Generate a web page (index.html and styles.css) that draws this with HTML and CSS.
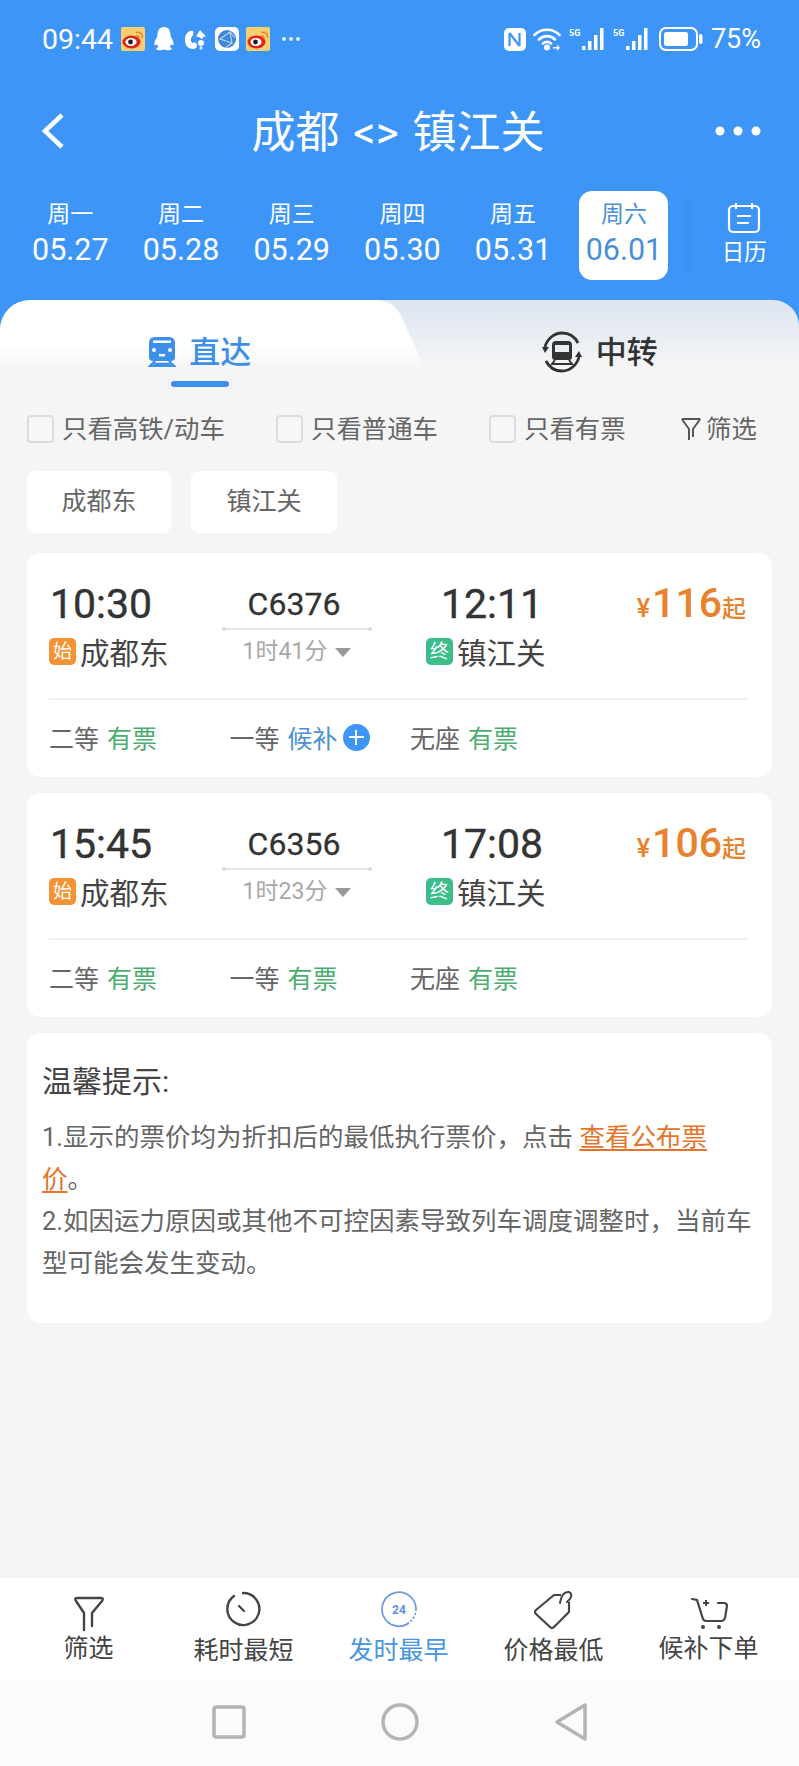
FILE: index.html
```html
<!DOCTYPE html>
<html lang="zh-CN">
<head>
<meta charset="utf-8">
<title>成都 &lt;&gt; 镇江关</title>
<link rel="stylesheet" href="styles.css">
</head>
<body>
<header class="header">
  <div class="status">
    <div class="status-left">
      <span class="clock">09:44</span>
      <svg class="st-icon" width="24" height="24" viewBox="0 0 24 24"><rect width="24" height="24" rx="2" fill="#f7cf6f"/><ellipse cx="10.5" cy="15" rx="9" ry="6.5" fill="#e2231a"/><ellipse cx="10" cy="15" rx="5.6" ry="4" fill="#fff"/><circle cx="9.5" cy="15" r="2.4" fill="#222"/><path d="M15 5.500C19 4.500 22 7 21.500 11" fill="none" stroke="#e8862c" stroke-width="1.500"/><path d="M15 9C17 8.500 18.500 9.500 18.300 11.500" fill="none" stroke="#e8862c" stroke-width="1.500"/></svg>
      <svg class="st-icon qq" width="20" height="24" viewBox="0 0 20 24"><path d="M10 0C5 0 3.500 4 3.500 8C3.500 10 2 11.500 1 14C0 17 .5 19 1.500 18.500L3 17C3.500 18.500 4 19.500 4.500 20C2.500 20.500 2 21.500 2.500 22.500C3.500 23.500 8 23.500 10 22.500C12 23.500 16.500 23.500 17.500 22.500C18 21.500 17.500 20.500 15.500 20C16 19.500 16.500 18.500 17 17L18.500 18.500C19.500 19 20 17 19 14C18 11.500 16.500 10 16.500 8C16.500 4 15 0 10 0Z" fill="#fff"/></svg>
      <svg class="st-icon sq" width="21" height="22" viewBox="0 0 21 22"><path d="M5 3C1.500 4.500 0 8 0 12C0 17.500 3 21 8 21C10.500 21 12 19.500 12 17.500C12 15 10 14 8.500 14.800C7 15.500 5.500 13.500 6 11C6.500 8.500 8.500 7.500 8.500 5C8.500 3 7 2.200 5 3Z" fill="#fff"/><path d="M15 2L21 8.500H18.500C18 10 17.500 10.800 16 11C16 9.500 13 8.500 11 8.500Z" fill="#fff"/><circle cx="16" cy="15" r="3" fill="#fff"/><circle cx="16" cy="20" r="1.500" fill="#fff"/></svg>
      <svg class="st-icon" width="24" height="24" viewBox="0 0 24 24"><rect width="24" height="24" rx="5" fill="#fff"/><circle cx="12" cy="12" r="9" fill="#3f86d8"/><path d="M5 12L15 5L17 16ZM15 5L20 11M17 16L10 21" fill="none" stroke="#bcd8f6" stroke-width="1.100"/></svg>
      <svg class="st-icon" width="24" height="24" viewBox="0 0 24 24"><rect width="24" height="24" rx="2" fill="#f7cf6f"/><ellipse cx="10.5" cy="15" rx="9" ry="6.500" fill="#e2231a"/><ellipse cx="10" cy="15" rx="5.600" ry="4" fill="#fff"/><circle cx="9.500" cy="15" r="2.400" fill="#222"/><path d="M15 5.500C19 4.500 22 7 21.500 11" fill="none" stroke="#e8862c" stroke-width="1.500"/><path d="M15 9C17 8.500 18.500 9.500 18.300 11.500" fill="none" stroke="#e8862c" stroke-width="1.500"/></svg>
      <svg class="st-more" width="20" height="6" viewBox="0 0 20 6"><circle cx="3" cy="3" r="2" fill="#dfeeff"/><circle cx="10" cy="3" r="2" fill="#dfeeff"/><circle cx="17" cy="3" r="2" fill="#dfeeff"/></svg>
    </div>
    <div class="status-right">
      <svg width="22" height="23" viewBox="0 0 22 23"><rect width="22" height="23" rx="5" fill="#fff"/><path d="M5.500 5V18M5.500 5L15.500 18M15.500 5V18" fill="none" stroke="#3d96f7" stroke-width="2.200"/></svg>
      <svg width="29" height="24" viewBox="0 0 29 24"><path d="M1.500 8C8 1 20 1 26.500 8M6 12.500C10.500 8 17.500 8 22 12.500M10 16.500C12.500 14.500 15.500 14.500 18 16.500" fill="none" stroke="#fff" stroke-width="2.600" stroke-linecap="round"/><circle cx="14" cy="20.500" r="3" fill="#fff"/><path d="M20 20H24V17.500L27 20.800L24 24V21.500H20Z" fill="#fff"/></svg>
      <svg width="37" height="24" viewBox="0 0 37 24"><text x="0" y="9" class="five-g">5G</text><rect x="13" y="19" width="3.500" height="4" fill="#fff"/><rect x="19" y="14" width="3.500" height="9" fill="#fff"/><rect x="25" y="8" width="3.500" height="15" fill="#fff"/><rect x="31" y="1" width="3.500" height="22" fill="#fff"/></svg>
      <svg width="37" height="24" viewBox="0 0 37 24"><text x="0" y="9" class="five-g">5G</text><rect x="13" y="19" width="3.500" height="4" fill="#fff"/><rect x="19" y="14" width="3.500" height="9" fill="#fff"/><rect x="25" y="8" width="3.500" height="15" fill="#fff"/><rect x="31" y="1" width="3.500" height="22" fill="#fff"/></svg>
      <svg class="battery" width="44" height="24" viewBox="0 0 44 24"><rect x="1" y="1" width="37" height="22" rx="6" fill="none" stroke="#fff" stroke-width="2"/><rect x="5" y="5" width="24" height="14" rx="2.500" fill="#fff"/><rect x="40" y="7" width="3.500" height="10" rx="1.700" fill="#fff"/></svg>
      <span class="pct">75%</span>
    </div>
  </div>
  <div class="titlebar">
    <svg class="back" width="26" height="38" viewBox="0 0 26 38"><path d="M22 3L5 19L22 35" fill="none" stroke="#fff" stroke-width="4.500"/></svg>
    <h1 class="title">成都 &lt;&gt; 镇江关</h1>
    <svg class="more" width="46" height="10" viewBox="0 0 46 10"><circle cx="5" cy="5" r="4.500" fill="#fff"/><circle cx="23" cy="5" r="4.500" fill="#fff"/><circle cx="41" cy="5" r="4.500" fill="#fff"/></svg>
  </div>
  <div class="dates">
    <div class="date"><span class="wk">周一</span><span class="dt">05.27</span></div>
    <div class="date"><span class="wk">周二</span><span class="dt">05.28</span></div>
    <div class="date"><span class="wk">周三</span><span class="dt">05.29</span></div>
    <div class="date"><span class="wk">周四</span><span class="dt">05.30</span></div>
    <div class="date"><span class="wk">周五</span><span class="dt">05.31</span></div>
    <div class="date date-on"><span class="wk">周六</span><span class="dt">06.01</span></div>
    <div class="cal">
      <svg width="34" height="32" viewBox="0 0 34 32"><rect x="2" y="4" width="30" height="26" rx="4" fill="none" stroke="#fff" stroke-width="2.200"/><path d="M9 1V7M25 1V7M10 14H24M10 21H22" fill="none" stroke="#fff" stroke-width="2.200"/></svg>
      <span>日历</span>
    </div>
  </div>
</header>

<div class="tabs">
  <div class="tabs-inner">
    <svg class="tab-shape" width="440" height="88" viewBox="0 0 440 88"><defs><linearGradient id="tabfade" x1="0" y1="0" x2="0" y2="1"><stop offset="0.5" stop-color="#fff"/><stop offset="0.82" stop-color="#f5f5f6"/></linearGradient></defs><path d="M0 88V26Q2 0 34 0H376Q394 0 402 18L434 88Z" fill="url(#tabfade)"/></svg>
    <div class="tab tab-on">
      <div class="tab-row">
        <svg width="28" height="30" viewBox="0 0 28 30"><path d="M7 0H21Q27 0 27 6V20Q27 24 23 24H5Q1 24 1 20V6Q1 0 7 0Z" fill="#3d90ea"/><rect x="5" y="3.500" width="18" height="2.500" fill="#fff"/><rect x="11" y="17" width="6" height="2.500" fill="#fff"/><circle cx="6" cy="13" r="2" fill="#fff"/><circle cx="22" cy="13" r="2" fill="#fff"/><path d="M7 24L2 29H26L21 24M6 27H22" fill="none" stroke="#3d90ea" stroke-width="2.400"/></svg>
        <span>直达</span>
      </div>
      <i class="tab-bar"></i>
    </div>
    <div class="tab">
      <div class="tab-row">
        <svg width="42" height="42" viewBox="0 0 42 42"><path d="M4 16C6 8 13 2 21 2C28 2 34 6 37 12M38 26C36 34 29 40 21 40C14 40 8 36 5 30" fill="none" stroke="#333" stroke-width="2.800"/><path d="M1 16H8L4 22ZM41 26H34L38 20Z" fill="#333"/><path d="M15 10H27Q31 10 31 14V26Q31 29 28 29H14Q11 29 11 26V14Q11 10 15 10Z" fill="#333"/><rect x="14" y="14" width="14" height="7" fill="#e8ecf3"/><path d="M14 29L11 33H31L28 29" fill="none" stroke="#333" stroke-width="2"/></svg>
        <span>中转</span>
      </div>
    </div>
  </div>
</div>

<main class="main">
  <div class="filters">
    <label class="chk"><i class="box"></i>只看高铁/动车</label>
    <label class="chk"><i class="box"></i>只看普通车</label>
    <label class="chk"><i class="box"></i>只看有票</label>
    <div class="chk chk-filter">
      <svg width="20" height="24" viewBox="0 0 20 24"><path d="M8 23V12L1.500 3Q1 2 2 2H18Q19 2 18.500 3L12 12V20" fill="none" stroke="#555" stroke-width="2" stroke-linejoin="round"/></svg>
      筛选
    </div>
  </div>
  <div class="chips">
    <span class="chip">成都东</span>
    <span class="chip chip-b">镇江关</span>
  </div>

  <article class="card">
    <div class="trip">
      <div class="col-dep">
        <div class="time">10:30</div>
        <div class="stn"><i class="tag tag-o">始</i>成都东</div>
      </div>
      <div class="col-train">
        <div class="no">C6376</div>
        <i class="rail"></i>
        <div class="dur">1时41分<i class="caret"></i></div>
      </div>
      <div class="col-arr">
        <div class="time time-arr">12:11</div>
        <div class="stn"><i class="tag tag-g">终</i>镇江关</div>
      </div>
      <div class="col-price"><small>¥</small><b>116</b><small>起</small></div>
    </div>
    <div class="seats">
      <div class="seat">二等<em class="ok">有票</em></div>
      <div class="seat">一等<em class="wait">候补</em><i class="plus"></i></div>
      <div class="seat">无座<em class="ok">有票</em></div>
    </div>
  </article>

  <article class="card">
    <div class="trip">
      <div class="col-dep">
        <div class="time">15:45</div>
        <div class="stn"><i class="tag tag-o">始</i>成都东</div>
      </div>
      <div class="col-train">
        <div class="no">C6356</div>
        <i class="rail"></i>
        <div class="dur">1时23分<i class="caret"></i></div>
      </div>
      <div class="col-arr">
        <div class="time time-arr">17:08</div>
        <div class="stn"><i class="tag tag-g">终</i>镇江关</div>
      </div>
      <div class="col-price"><small>¥</small><b>106</b><small>起</small></div>
    </div>
    <div class="seats">
      <div class="seat">二等<em class="ok">有票</em></div>
      <div class="seat">一等<em class="ok">有票</em></div>
      <div class="seat">无座<em class="ok">有票</em></div>
    </div>
  </article>

  <section class="notice">
    <h2>温馨提示:</h2>
    <p>1.显示的票价均为折扣后的最低执行票价，点击 <a>查看公布票价</a>。</p>
    <p>2.如因运力原因或其他不可控因素导致列车调度调整时，当前车型可能会发生变动。</p>
  </section>
</main>

<nav class="tabbar">
  <div class="tb">
    <svg width="40" height="42" viewBox="0 0 40 42"><path d="M15 40V23L7 11Q5 8 8 8H32Q35 8 33 11L23 23V36" fill="none" stroke="#444" stroke-width="2.400" stroke-linejoin="round" stroke-linecap="round"/></svg>
    <span class="tb-up">筛选</span>
  </div>
  <div class="tb">
    <svg width="40" height="42" viewBox="0 0 40 42"><path d="M10 6A16 16 0 1 0 19 3" fill="none" stroke="#444" stroke-width="2.400" stroke-linecap="round"/><path d="M15 16L20 21" stroke="#444" stroke-width="2.200" stroke-linecap="round"/></svg>
    <span>耗时最短</span>
  </div>
  <div class="tb tb-on">
    <svg width="40" height="42" viewBox="0 0 40 42"><path d="M30 33A17 17 0 1 1 37 19" fill="none" stroke="#6f9be0" stroke-width="1.800"/><path d="M37 19A17 17 0 0 1 20 36A17 17 0 0 1 9 32" fill="none" stroke="#6f9be0" stroke-width="1.800" stroke-dasharray="2 2"/><text x="20" y="23.500" class="t24">24</text></svg>
    <span>发时最早</span>
  </div>
  <div class="tb">
    <svg width="40" height="42" viewBox="0 0 40 42"><path d="M27 5H20L2 20Q0 22 2 24L16 37Q18 39 20 37L35 22V12" fill="none" stroke="#444" stroke-width="2.200" stroke-linejoin="round"/><path d="M26 13Q28 1 35 2Q39 4 36 9L33 12" fill="none" stroke="#444" stroke-width="2" stroke-linecap="round"/></svg>
    <span>价格最低</span>
  </div>
  <div class="tb">
    <svg width="40" height="42" viewBox="0 0 40 42"><path d="M3 9L8 10L14 29Q15 31 17 31H32Q35 31 36 28L38 16Q38 13 35 13H29" fill="none" stroke="#444" stroke-width="2.200" stroke-linecap="round"/><path d="M14 13H20M17 10V16" stroke="#444" stroke-width="2"/><circle cx="14" cy="37" r="2" fill="#444"/><circle cx="30" cy="37" r="2" fill="#444"/></svg>
    <span class="tb-up">候补下单</span>
  </div>
</nav>
<div class="sysnav">
  <svg width="34" height="34" viewBox="0 0 34 34"><rect x="2" y="2" width="30" height="30" rx="2" fill="none" stroke="#b4b4b4" stroke-width="3.500"/></svg>
  <svg width="38" height="38" viewBox="0 0 38 38"><circle cx="19" cy="19" r="17" fill="none" stroke="#b4b4b4" stroke-width="3.500"/></svg>
  <svg width="34" height="38" viewBox="0 0 34 38"><path d="M3 19L31 2V36Z" fill="none" stroke="#b4b4b4" stroke-width="3.500" stroke-linejoin="round"/></svg>
</div>
</body>
</html>
```

FILE: styles.css
```css
* { box-sizing: border-box; }
html, body { margin: 0; padding: 0; }
body {
  height: 100vh;
  overflow: hidden;
  display: flex;
  flex-direction: column;
  background: #f5f5f6;
  font-family: Roboto, "Noto Sans CJK SC", sans-serif;
  color: #666;
}
i, em { font-style: normal; }

.header { background: #3d96f7; color: #fff; padding-bottom: 20px; }

.status {
  height: 78px;
  display: flex;
  align-items: center;
  justify-content: space-between;
  padding: 0 38px 0 42px;
}
.status-left, .status-right { display: flex; align-items: center; }
.clock { font-size: 28.500px; width: 79px; }
.st-icon { margin-right: 7px; }
.qq { margin-left: 2px; margin-right: 11px; }
.sq { margin-right: 9px; }
.st-more { margin-left: 4px; }
.status-right { gap: 7px; }
.battery { margin-left: 2px; }
.pct { font-size: 27px; margin-left: 1px; }
.five-g { font: 700 9px Roboto, sans-serif; fill: #fff; }

.titlebar {
  height: 106px;
  display: flex;
  align-items: center;
  justify-content: space-between;
  padding: 0 38px 0 40px;
}
.title {
  margin: 4px 0 0 15px;
  font-size: 44px;
  font-weight: 400;
  line-height: 60px;
  word-spacing: 3px;
}

.dates { display: flex; padding: 7px 0 0 15px; }
.date {
  width: 110.7px;
  height: 89px;
  display: flex;
  flex-direction: column;
  align-items: center;
}
.wk { font-size: 23px; line-height: 28px; margin-top: 10px; }
.dt { font-size: 30.500px; line-height: 40px; margin-top: 1px; }
.date-on {
  width: 89px;
  margin: 0 11px;
  background: #fff;
  border-radius: 13px;
  color: #4b8fd6;
}
.cal {
  position: relative;
  flex: 1;
  padding-left: 10px;
  display: flex;
  flex-direction: column;
  align-items: center;
  padding-top: 11px;
  font-size: 22.500px;
}
.cal::before {
  content: "";
  position: absolute;
  left: 3px;
  top: 8px;
  width: 9px;
  height: 74px;
  background: linear-gradient(90deg, rgba(45,125,215,0), rgba(45,125,215,.25));
}
.cal span { line-height: 30px; margin-top: 3px; }

.tabs { background: #3d96f7; }
.tabs-inner {
  position: relative;
  height: 88px;
  display: flex;
  border-radius: 30px 26px 0 0;
  background: linear-gradient(#dfe6f1 4%, #e7ecf3 35%, #f5f5f6 78%);
  overflow: hidden;
}
.tab-shape { position: absolute; left: 0; top: 0; }
.tab {
  position: relative;
  flex: 1;
  display: flex;
  flex-direction: column;
  align-items: center;
  padding-top: 30px;
}
.tab-row {
  height: 44px;
  display: flex;
  align-items: center;
  gap: 13px;
  font-size: 31px;
  font-weight: 500;
  color: #333;
}
.tab-row span { margin-bottom: 6px; }
.tab-on .tab-row { color: #3d90ea; }
.tab-bar {
  display: block;
  width: 58px;
  height: 6px;
  margin-top: 7px;
  border-radius: 3px;
  background: #3d90ea;
}

.main { flex: 1; min-height: 0; padding: 0 27px; }

.filters {
  height: 40px;
  margin-top: 21px;
  display: grid;
  grid-template-columns: 249px 213px 192px auto;
  align-items: center;
}
.chk {
  display: flex;
  align-items: center;
  gap: 8px;
  font-size: 25.400px;
  line-height: 40px;
  color: #666;
  white-space: nowrap;
}
.chk-filter { gap: 5px; }
.box {
  width: 27px;
  height: 28px;
  border: 2px solid #dcdcdc;
  border-radius: 4px;
  background: #f7f7f7;
}

.chips { display: flex; gap: 20px; margin-top: 22px; }
.chip {
  width: 144px;
  height: 62px;
  background: #fff;
  border-radius: 8px;
  font-size: 25px;
  line-height: 62px;
  text-align: center;
  color: #666;
}
.chip-b { width: 146px; }

.card {
  margin-top: 20px;
  height: 224px;
  background: #fff;
  border-radius: 14px;
  padding: 25px 24px 0 22px;
}
.card + .card { margin-top: 16px; }
.trip {
  display: grid;
  grid-template-columns: 173px 150px 179px 1fr;
  height: 122px;
  border-bottom: 2px solid #f1f1f1;
}
.time { font-size: 41px; line-height: 46px; margin-top: 3px; color: #333; padding-left: 1px; -webkit-text-stroke: .4px #333; white-space: nowrap; }
.stn {
  display: flex;
  align-items: center;
  gap: 4px;
  height: 40px;
  margin-top: 4px;
  font-size: 29.500px;
  color: #444;
  white-space: nowrap;
}
.tag {
  width: 27px;
  height: 27px;
  border-radius: 5px;
  font-size: 19px;
  line-height: 27px;
  text-align: center;
  color: #fff;
}
.tag-o { background: #f39333; }
.tag-g { background: #3dbd8a; }
.col-train { display: flex; flex-direction: column; align-items: center; }
.no { font-size: 32px; line-height: 46px; margin-top: 3px; color: #333; margin-right: 6px; -webkit-text-stroke: .3px #333; }
.rail {
  position: relative;
  display: block;
  width: 100%;
  height: 2px;
  background: #e4e4e4;
  margin-top: 1px;
}
.rail::before, .rail::after {
  content: "";
  position: absolute;
  top: -1px;
  width: 4px;
  height: 4px;
  border-radius: 50%;
  background: #dcdcdc;
}
.rail::before { left: 0; }
.rail::after { right: 0; }
.dur {
  display: flex;
  align-items: center;
  gap: 8px;
  font-size: 23px;
  line-height: 40px;
  color: #a8a8a8;
  margin-top: 2px;
}
.caret {
  width: 0;
  height: 0;
  border-left: 8px solid transparent;
  border-right: 8px solid transparent;
  border-top: 9px solid #999;
}
.col-arr { padding-left: 54px; }
.time-arr { padding-left: 15px; }
.col-price {
  display: flex;
  align-items: baseline;
  justify-content: flex-end;
  height: 46px;
  margin-top: 2px;
  padding-right: 2px;
  color: #e8822c;
  line-height: 46px;
}
.col-price b { font-size: 41px; font-weight: 500; }
.col-price small { font-size: 24px; font-weight: 500; }
.col-price small:first-child { font-size: 25px; margin-right: 2px; }

.seats {
  display: grid;
  grid-template-columns: repeat(3, 180.500px);
  height: 74px;
  align-items: center;
}
.seat { display: flex; align-items: center; font-size: 25px; color: #666; white-space: nowrap; }
.seat em { margin-left: 8px; }
.ok { color: #4cae6e; }
.wait { color: #4a90d2; }
.plus {
  position: relative;
  width: 27px;
  height: 27px;
  margin-left: 5px;
  border-radius: 50%;
  background: #3d96f7;
}
.plus::before, .plus::after {
  content: "";
  position: absolute;
  background: #fff;
}
.plus::before { left: 6px; right: 6px; top: 12.500px; height: 2px; }
.plus::after { top: 6px; bottom: 6px; left: 12.500px; width: 2px; }

.notice {
  height: 290px;
  margin-top: 16px;
  padding: 25px 15px 0;
  background: #fff;
  border-radius: 14px;
}
.notice h2 {
  margin: 0 0 10px;
  font-size: 30px;
  line-height: 48px;
  font-weight: 400;
  color: #444;
}
.notice p {
  margin: 0;
  font-size: 25.500px;
  line-height: 42px;
  color: #666;
}
.notice a {
  color: #e5732a;
  text-decoration: underline;
  text-decoration-thickness: 2px;
  text-underline-offset: 3px;
}

.tabbar {
  height: 102px;
  display: grid;
  grid-template-columns: repeat(5, 155px);
  padding: 12px 11px 0;
  background: #fff;
}
.tb {
  display: flex;
  flex-direction: column;
  align-items: center;
  font-size: 25px;
  color: #444;
}
.tb span { line-height: 36px; margin-top: 1px; white-space: nowrap; }
.tb span.tb-up { margin-top: -1px; }
.tb-on { color: #4a95dc; }
.t24 { font: 700 12px Roboto, sans-serif; fill: #5f8fdc; text-anchor: middle; }

.sysnav {
  height: 86px;
  display: grid;
  grid-template-columns: 34px 38px 34px;
  column-gap: 135px;
  justify-content: center;
  align-items: center;
  padding-bottom: 3px;
  background: #fbfbfb;
}
```
